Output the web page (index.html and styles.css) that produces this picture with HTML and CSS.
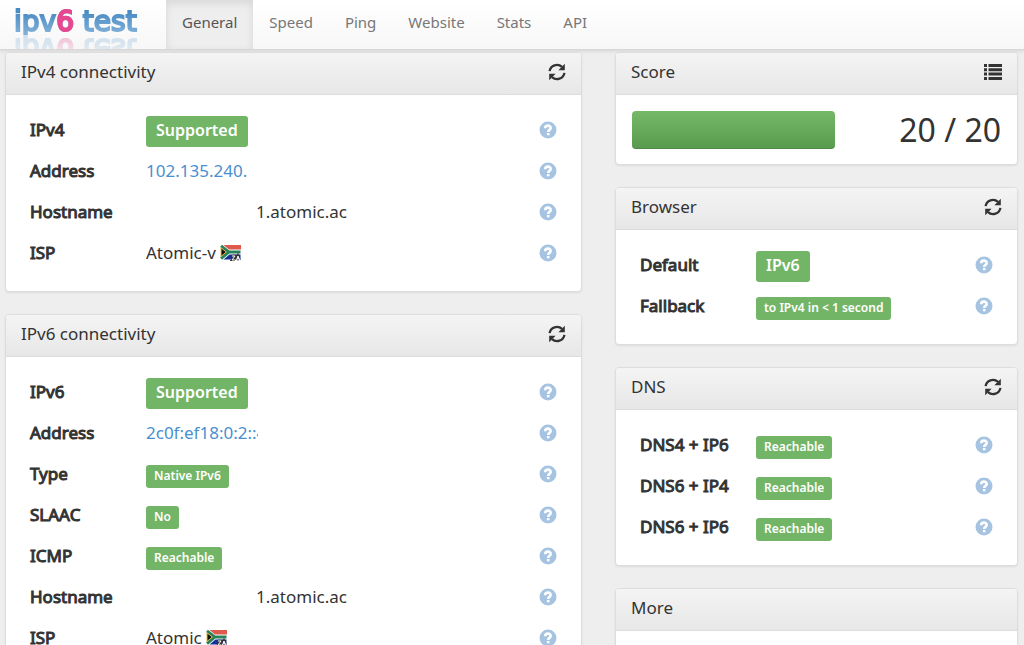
FILE: index.html
```
<!DOCTYPE html>
<html lang="en">
<head>
  <meta charset="UTF-8">
  <meta name="viewport" content="width=device-width, initial-scale=1">
  <title>IPv6 test</title>
  <link rel="stylesheet" href="styles.css">
</head>
<body>
  <!-- shared icons -->
  <svg class="sprite" width="0" height="0" aria-hidden="true">
    <symbol id="refresh" viewBox="0 0 18 18">
      <path d="M1.6 8.2A7.4 7.4 0 0 1 14 3.9M16.4 9.8A7.4 7.4 0 0 1 4 14.1" fill="none" stroke="#333" stroke-width="2.300"/>
      <path d="M16.8 .8v6.400h-6.400zM1.2 17.200v-6.400h6.400z" fill="#333"/>
    </symbol>
    <symbol id="list" viewBox="0 0 18 18">
      <path d="M0 1h3v3H0zM4.500 1H18v3H4.500zM0 5.300h3v3H0zM4.500 5.300H18v3H4.500zM0 9.600h3v3H0zM4.500 9.600H18v3H4.500zM0 14h3v3H0zM4.500 14H18v3H4.500z" fill="#333"/>
    </symbol>
    <symbol id="help" viewBox="0 0 18 18">
      <circle cx="9" cy="9" r="8.500" fill="#a6c4e2"/>
      <path d="M6.200 7.200C6.200 3.800 11.700 3.800 11.700 7C11.700 8.900 9.200 8.900 9.200 11" fill="none" stroke="#fff" stroke-width="2.600"/>
      <path d="M7.900 12h2.600v2.300H7.900z" fill="#fff"/>
    </symbol>
    <symbol id="flag" viewBox="0 0 22 17">
      <path d="M1 1h20v15H1z" fill="#fff"/>
      <path d="M1 1h20v4.500H9L3.500 1z" fill="#de5a4c"/>
      <path d="M3.500 15.500L9.500 10.500H20.500V15.500z" fill="#17319a"/>
      <path d="M1 1.800L8.800 8L1 14.500M8 8H20.500" fill="none" stroke="#2a8358" stroke-width="3"/>
      <path d="M1 3.800L6.300 8L1 12.500z" fill="#111" stroke="#e5b64a" stroke-width="1"/>
      <path d="M12 12h3l-3 4h3M16.500 16l1.500-4l1.500 4M17 14.800h2.500" fill="none" stroke="#333" stroke-width="2.500"/>
      <path d="M12 12h3l-3 4h3M16.500 16l1.500-4l1.500 4M17 14.800h2.500" fill="none" stroke="#fff" stroke-width="1"/>
    </symbol>
  </svg>

  <header class="navbar">
    <a class="brand" href="#"><span class="logo">ipv<b>6</b> test</span></a>
    <nav>
      <a class="active" href="#">General</a>
      <a href="#">Speed</a>
      <a href="#">Ping</a>
      <a href="#">Website</a>
      <a href="#">Stats</a>
      <a href="#">API</a>
    </nav>
  </header>

  <main class="columns">
    <div class="column">
      <section class="panel">
        <div class="panel-heading">
          <h2>IPv4 connectivity</h2>
          <button type="button" aria-label="Refresh IPv4"><svg><use href="#refresh"/></svg></button>
        </div>
        <dl class="rows">
          <div><dt>IPv4</dt><dd><span class="badge large">Supported</span></dd><a href="#" aria-label="Help"><svg><use href="#help"/></svg></a></div>
          <div><dt>Address</dt><dd><a href="#">102.135.240.</a></dd><a href="#" aria-label="Help"><svg><use href="#help"/></svg></a></div>
          <div><dt>Hostname</dt><dd class="hostname">1.atomic.ac</dd><a href="#" aria-label="Help"><svg><use href="#help"/></svg></a></div>
          <div><dt>ISP</dt><dd>Atomic-v <svg class="flag"><use href="#flag"/></svg></dd><a href="#" aria-label="Help"><svg><use href="#help"/></svg></a></div>
        </dl>
      </section>

      <section class="panel">
        <div class="panel-heading">
          <h2>IPv6 connectivity</h2>
          <button type="button" aria-label="Refresh IPv6"><svg><use href="#refresh"/></svg></button>
        </div>
        <dl class="rows">
          <div><dt>IPv6</dt><dd><span class="badge large">Supported</span></dd><a href="#" aria-label="Help"><svg><use href="#help"/></svg></a></div>
          <div><dt>Address</dt><dd><a class="address" href="#">2c0f:ef18:0:2::4</a></dd><a href="#" aria-label="Help"><svg><use href="#help"/></svg></a></div>
          <div><dt>Type</dt><dd><span class="badge">Native IPv6</span></dd><a href="#" aria-label="Help"><svg><use href="#help"/></svg></a></div>
          <div><dt>SLAAC</dt><dd><span class="badge">No</span></dd><a href="#" aria-label="Help"><svg><use href="#help"/></svg></a></div>
          <div><dt>ICMP</dt><dd><span class="badge">Reachable</span></dd><a href="#" aria-label="Help"><svg><use href="#help"/></svg></a></div>
          <div><dt>Hostname</dt><dd class="hostname">1.atomic.ac</dd><a href="#" aria-label="Help"><svg><use href="#help"/></svg></a></div>
          <div><dt>ISP</dt><dd>Atomic <svg class="flag"><use href="#flag"/></svg></dd><a href="#" aria-label="Help"><svg><use href="#help"/></svg></a></div>
        </dl>
      </section>
    </div>

    <div class="column">
      <section class="panel">
        <div class="panel-heading">
          <h2>Score</h2>
          <button type="button" aria-label="Score details"><svg><use href="#list"/></svg></button>
        </div>
        <div class="score">
          <div class="bar"></div>
          <p>20 / 20</p>
        </div>
      </section>

      <section class="panel">
        <div class="panel-heading">
          <h2>Browser</h2>
          <button type="button" aria-label="Refresh browser"><svg><use href="#refresh"/></svg></button>
        </div>
        <dl class="rows">
          <div><dt>Default</dt><dd><span class="badge large">IPv6</span></dd><a href="#" aria-label="Help"><svg><use href="#help"/></svg></a></div>
          <div><dt>Fallback</dt><dd><span class="badge">to IPv4 in &lt; 1 second</span></dd><a href="#" aria-label="Help"><svg><use href="#help"/></svg></a></div>
        </dl>
      </section>

      <section class="panel">
        <div class="panel-heading">
          <h2>DNS</h2>
          <button type="button" aria-label="Refresh DNS"><svg><use href="#refresh"/></svg></button>
        </div>
        <dl class="rows">
          <div><dt>DNS4 + IP6</dt><dd><span class="badge">Reachable</span></dd><a href="#" aria-label="Help"><svg><use href="#help"/></svg></a></div>
          <div><dt>DNS6 + IP4</dt><dd><span class="badge">Reachable</span></dd><a href="#" aria-label="Help"><svg><use href="#help"/></svg></a></div>
          <div><dt>DNS6 + IP6</dt><dd><span class="badge">Reachable</span></dd><a href="#" aria-label="Help"><svg><use href="#help"/></svg></a></div>
        </dl>
      </section>

      <section class="panel">
        <div class="panel-heading">
          <h2>More</h2>
        </div>
        <div class="rows"></div>
      </section>
    </div>
  </main>
</body>
</html>
```
FILE: styles.css
```
* { box-sizing: border-box; }
body {
  margin: 0;
  background: #eeeeee;
  color: #333;
  font-family: "Noto Sans", sans-serif;
  font-size: 17px;
  line-height: 24px;
}
a { color: #4a8fd0; text-decoration: none; }
h2, p, dl, dd { margin: 0; }
.sprite { position: absolute; }

.navbar {
  display: flex;
  height: 50px;
  padding-left: 14px;
  background: linear-gradient(#fff, #f7f7f7);
  border-bottom: 1px solid #d8d8d8;
  box-shadow: 0 1px 4px rgba(0,0,0,0.12);
}
.brand {
  width: 152px;
  height: 49px;
  overflow: hidden;
}
.logo {
  display: block;
  height: 35px;
  padding-top: 6px;
  font-family: "DejaVu Sans", sans-serif;
  font-size: 28px;
  line-height: 32px;
  white-space: nowrap;
  color: transparent;
  background: linear-gradient(#4a8bc4 12px, #82b1d8 34px);
  background-clip: text;
  -webkit-background-clip: text;
  -webkit-text-stroke: 2px transparent;
  -webkit-box-reflect: below 0 linear-gradient(transparent 30%, rgba(0,0,0,0.35));
}
.logo b { font-weight: 400; color: #e8488f; -webkit-text-stroke: 2px #e8488f; }
nav { display: flex; }
nav a {
  padding: 10px 16px;
  font-size: 15px;
  color: #777;
}
nav a.active {
  color: #555;
  background: #eee;
  box-shadow: inset 0 3px 8px rgba(0,0,0,0.1);
}

.columns {
  display: grid;
  grid-template-columns: 577fr 403fr;
  gap: 33px;
  align-items: start;
  padding: 2px 6px 20px 5px;
}
.column { display: grid; gap: 22px; }
.panel {
  background: #fff;
  border: 1px solid #ddd;
  border-radius: 4px;
  box-shadow: 0 1px 2px rgba(0,0,0,0.08);
}
.panel-heading {
  display: flex;
  justify-content: space-between;
  align-items: center;
  height: 42px;
  padding: 0 15px 3px;
  background: linear-gradient(#f4f4f4, #e7e7e7);
  border-bottom: 1px solid #ddd;
  border-radius: 3px 3px 0 0;
}
.panel-heading h2 { font-size: 17px; font-weight: 400; }
.panel-heading button { display: flex; padding: 0; border: 0; background: none; cursor: pointer; }
.panel-heading svg { width: 18px; height: 18px; }

.rows { padding: 14px 24px 18px; }
.rows > div { display: flex; align-items: center; height: 41px; }
.rows > div > a { display: flex; }
.rows > div > a svg { width: 18px; height: 18px; }
dt { width: 116px; -webkit-text-stroke: 1px #333; }
dd { display: flex; flex: 1; align-items: center; gap: 4px; }
.hostname { padding-left: 110px; }
.address { width: 112px; overflow: hidden; white-space: nowrap; }
.flag { width: 22px; height: 17px; }
.badge {
  padding: 2px 8px 3px;
  margin-top: 5px;
  border-radius: 3px;
  background: #73b566;
  color: #fff;
  font-size: 12px;
  font-weight: 600;
  line-height: 18px;
}
.badge.large {
  padding: 2px 10px 5px;
  margin-top: 3px;
  font-size: 16px;
  line-height: 24px;
}

.score {
  display: flex;
  justify-content: space-between;
  align-items: center;
  padding: 16px 16px 15px;
}
.bar {
  width: 55%;
  height: 38px;
  border-radius: 4px;
  background: linear-gradient(#75b868, #599b4e);
  box-shadow: inset 0 -1px 0 rgba(0,0,0,0.1);
}
.score p { font-size: 32px; line-height: 36px; }
```
